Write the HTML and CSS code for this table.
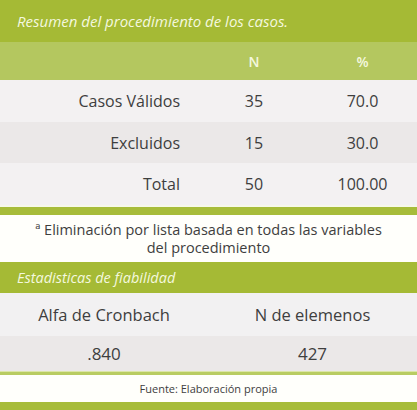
FILE: index.html
```html
<!DOCTYPE html>
<html lang="es">
<head>
<meta charset="utf-8">
<title>Resumen del procedimiento de los casos</title>
<link rel="stylesheet" href="styles.css">
</head>
<body>
<div class="card">
  <div class="band-title">Resumen del procedimiento de los casos.</div>
  <div class="grid3 head">
    <div></div><div class="c">N</div><div class="c">%</div>
  </div>
  <div class="grid3 row light">
    <div class="r">Casos Válidos</div><div class="c">35</div><div class="c">70.0</div>
  </div>
  <div class="grid3 row dark">
    <div class="r">Excluidos</div><div class="c">15</div><div class="c">30.0</div>
  </div>
  <div class="grid3 row light last">
    <div class="r">Total</div><div class="c">50</div><div class="c">100.00</div>
  </div>
  <div class="rule-thick"></div>
  <div class="note">ª Eliminación por lista basada en todas las variables<br>del procedimiento</div>
  <div class="band-title small">Estadisticas de fiabilidad</div>
  <div class="grid2 head2">
    <div>Alfa de Cronbach</div><div>N de elemenos</div>
  </div>
  <div class="grid2 vals">
    <div>.840</div><div>427</div>
  </div>
  <div class="rule-thin"></div>
  <div class="source">Fuente: Elaboración propia</div>
  <div class="rule-bottom"></div>
</div>
</body>
</html>
```
FILE: styles.css
```css
html, body {
  margin: 0;
  padding: 0;
  background: #ffffff;
}
.card {
  width: 417px;
  font-family: "Open Sans", "DejaVu Sans", sans-serif;
  color: #3e3e3e;
}
.band-title {
  height: 42px;
  background: #a5ba35;
  color: #f4f8df;
  font-style: italic;
  font-size: 15px;
  display: flex;
  align-items: center;
  padding-left: 17px;
}
.band-title.small {
  height: 31px;
  font-size: 14.5px;
}
.grid3 {
  display: grid;
  grid-template-columns: 200px 108px 109px;
  align-items: center;
}
.grid3 .r {
  text-align: right;
  padding-right: 20px;
}
.grid3 .c {
  text-align: center;
}
.head {
  height: 38px;
  background: #b4c75f;
  color: #f4f8df;
  font-size: 14px;
  font-weight: 600;
}
.row {
  font-size: 16px;
}
.light { background: #f3f1f2; height: 42px; }
.dark { background: #ebe8e8; height: 41px; }
.last { height: 42px; border-bottom: 2px solid #f6f8ea; }
.rule-thick {
  height: 8px;
  background: #a7bc3a;
}
.note {
  height: 47px;
  background: #fffffb;
  font-size: 14.5px;
  line-height: 18px;
  text-align: center;
  display: flex;
  align-items: center;
  justify-content: center;
}
.grid2 {
  display: grid;
  grid-template-columns: 208px 209px;
  align-items: center;
  text-align: center;
}
.head2 {
  height: 43px;
  background: #f2f1f2;
  font-size: 16.5px;
}
.vals {
  height: 35px;
  background: #ebe8e8;
  font-size: 17px;
}
.rule-thin {
  height: 3px;
  background: #b9cc62;
  border-top: 1px solid #dce6a8;
}
.source {
  height: 27px;
  background: #fffffb;
  font-size: 11px;
  display: flex;
  align-items: center;
  justify-content: center;
}
.rule-bottom {
  height: 8px;
  background: #a7bc3a;
}
```
